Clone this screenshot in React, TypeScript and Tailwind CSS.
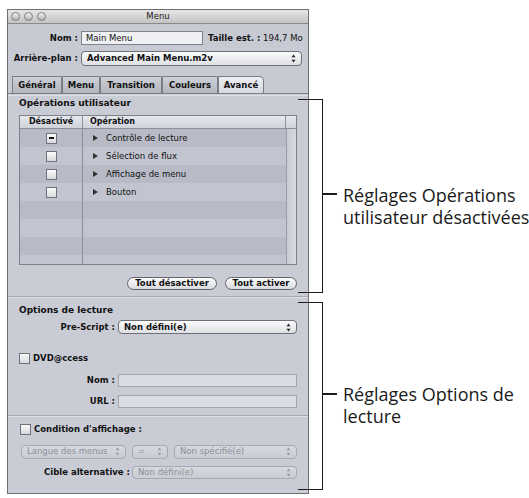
import React from 'react';

function Arrows({ disabled = false }: { disabled?: boolean }) {
  const c = disabled ? '#9a9da5' : '#222';
  return (
    <svg width="5" height="9" viewBox="0 0 5 9" className="shrink-0">
      <path d="M2.5 0.5 L4.5 3.3 L0.5 3.3 Z" fill={c} />
      <path d="M2.5 8.5 L4.5 5.7 L0.5 5.7 Z" fill={c} />
    </svg>
  );
}

function Popup({ text, w, h = 14, disabled = false }: { text: string; w: string; h?: number; disabled?: boolean }) {
  return (
    <div
      className={`${w} flex items-center justify-between pl-[5px] pr-[5px] rounded-[4px] border ${
        disabled
          ? 'border-[#a7aab2] bg-gradient-to-b from-[#d6d9df] to-[#c9ccd3] text-[#8c8f97] font-normal'
          : 'border-[#6e7078] bg-gradient-to-b from-[#fbfbfc] to-[#dfe0e4] text-[#111] font-bold'
      }`}
      style={{ height: h }}
    >
      <span className="truncate">{text}</span>
      <Arrows disabled={disabled} />
    </div>
  );
}

function Checkbox({ mixed = false }: { mixed?: boolean }) {
  return (
    <div className="w-[11px] h-[11px] shrink-0 border border-[#6f727a] bg-gradient-to-b from-[#fafafa] to-[#d9dade] flex items-center justify-center">
      {mixed && <div className="w-[5px] h-[2px] bg-[#111]" />}
    </div>
  );
}

function Field({ w, h = 13 }: { w: string; h?: number }) {
  return <div className={`${w} border border-[#a3a6ae] bg-[#d9dce3]`} style={{ height: h }} />;
}

const tabs = [
  { label: 'Général', w: 'w-[50px]' },
  { label: 'Menu', w: 'w-[38px]' },
  { label: 'Transition', w: 'w-[62px]' },
  { label: 'Couleurs', w: 'w-[56px]' },
  { label: 'Avancé', w: 'w-[46px]', active: true },
];

const operations = ['Contrôle de lecture', 'Sélection de flux', 'Affichage de menu', 'Bouton'];

export default function App() {
  const rows = Array.from({ length: 8 }, (_, i) => i);

  return (
    <div
      className="w-[529px] h-[498px] bg-white overflow-hidden flex items-start text-[8.5px] text-[#111]"
      style={{ fontFamily: '"DejaVu Sans", Verdana, sans-serif' }}
    >
      {/* Window */}
      <div className="ml-[7px] mt-[9px] w-[302px] h-[485px] shrink-0 border border-[#6d6f75] bg-[#c7cad3] flex flex-col">
        {/* Title bar */}
        <div className="h-[14px] relative flex items-center justify-center bg-gradient-to-b from-[#e6e6e6] to-[#c4c4c4] border-b border-[#8a8a8a]">
          <div className="absolute left-[3px] top-[2px] flex gap-[4px]">
            {[0, 1, 2].map((i) => (
              <div key={i} className="w-[9px] h-[9px] rounded-full border border-[#7c7c7c] bg-gradient-to-b from-[#f2f2f2] to-[#b3b3b3]" />
            ))}
          </div>
          <span className="text-[8.5px] text-[#222]">Menu</span>
        </div>

        {/* Nom */}
        <div className="mt-[7px] h-[14px] flex items-center">
          <div className="w-[70px] text-right font-bold">Nom :</div>
          <div className="ml-[3px] w-[122px] h-[14px] border border-[#7f8289] bg-[#eef0f4] flex items-center pl-[4px]">
            Main Menu
          </div>
          <div className="ml-[5px] whitespace-nowrap">
            <span className="font-bold">Taille est. :</span> 194,7 Mo
          </div>
        </div>

        {/* Arrière-plan */}
        <div className="mt-[6px] flex items-center">
          <div className="w-[70px] text-right font-bold whitespace-nowrap">Arrière-plan :</div>
          <div className="ml-[3px]">
            <Popup text="Advanced Main Menu.m2v" w="w-[221px]" h={15} />
          </div>
        </div>

        {/* Tabs */}
        <div className="mt-[10px] h-[17px] pl-[4px] flex items-end">
          {tabs.map((t) => (
            <div
              key={t.label}
              className={`${t.w} h-[17px] flex items-center justify-center font-bold border border-b-0 ${
                t.active
                  ? 'bg-gradient-to-b from-[#eceef2] to-[#d6d9e0] border-[#7a7d85] rounded-tr-[5px]'
                  : 'bg-gradient-to-b from-[#cdd0d7] to-[#b3b6bf] border-[#7a7d85] rounded-tr-[2px]'
              }`}
            >
              {t.label}
            </div>
          ))}
        </div>

        {/* Panel */}
        <div className="flex-1 border-t border-[#7d8088] bg-[#c9ccd5] flex flex-col">
          {/* Section 1 */}
          <div className="mt-[1px] border-t border-[#dfe1e7] px-[11px] pb-[6px] border-b border-b-[#a5a8b0]">
            <div className="mt-[1px] h-[12px] leading-[12px] font-bold text-[9px]">Opérations utilisateur</div>
            <div className="mt-[6px] h-[150px] border border-[#7e818a] flex flex-col overflow-hidden">
              <div className="h-[13px] shrink-0 flex bg-gradient-to-b from-[#e6e8ed] to-[#cfd2d9] border-b border-[#8c8f98] text-[8px] font-bold">
                <div className="w-[63px] flex items-center justify-center border-r border-[#8c8f98]">Désactivé</div>
                <div className="flex-1 flex items-center pl-[7px] border-r border-[#8c8f98]">Opération</div>
                <div className="w-[10px]" />
              </div>
              <div className="flex-1 flex">
                <div className="flex-1 flex flex-col">
                  {rows.map((i) => (
                    <div key={i} className={`h-[18px] shrink-0 flex ${i % 2 === 0 ? 'bg-[#b8bbc6]' : 'bg-[#c2c5cf]'}`}>
                      <div className="w-[63px] flex items-center justify-center border-r border-[#8c8f98]">
                        {i < operations.length && <Checkbox mixed={i === 0} />}
                      </div>
                      <div className="flex-1 flex items-center pl-[10px] text-[8.5px]">
                        {i < operations.length && (
                          <>
                            <svg width="5" height="6" viewBox="0 0 5 6" className="shrink-0">
                              <path d="M0 0 L5 3 L0 6 Z" fill="#333" />
                            </svg>
                            <span className="ml-[8px] whitespace-nowrap">{operations[i]}</span>
                          </>
                        )}
                      </div>
                    </div>
                  ))}
                </div>
                <div className="w-[10px] border-l border-[#9a9da6] bg-gradient-to-r from-[#c8cbd4] to-[#d8dae1]" />
              </div>
            </div>
            <div className="mt-[12px] flex justify-end gap-[8px]">
              <div className="w-[90px] h-[13px] rounded-full border border-[#61646b] bg-gradient-to-b from-[#fdfdfd] to-[#d9dadf] flex items-center justify-center font-bold">
                Tout désactiver
              </div>
              <div className="w-[72px] h-[13px] rounded-full border border-[#61646b] bg-gradient-to-b from-[#fdfdfd] to-[#d9dadf] flex items-center justify-center font-bold">
                Tout activer
              </div>
            </div>
          </div>

          {/* Section 2 */}
          <div className="border-t border-[#dfe1e7] pb-[7px] border-b border-b-[#a5a8b0]">
            <div className="mt-[6px] pl-[11px] h-[12px] leading-[12px] font-bold text-[9px]">Options de lecture</div>
            <div className="mt-[4px] flex items-center">
              <div className="w-[107px] text-right font-bold">Pre-Script :</div>
              <div className="ml-[3px]">
                <Popup text="Non défini(e)" w="w-[179px]" h={14} />
              </div>
            </div>
            <div className="mt-[18px] pl-[11px] flex items-center">
              <Checkbox />
              <span className="ml-[3px] font-bold">DVD@ccess</span>
            </div>
            <div className="mt-[9px] flex items-center">
              <div className="w-[107px] text-right font-bold">Nom :</div>
              <div className="ml-[3px]">
                <Field w="w-[179px]" />
              </div>
            </div>
            <div className="mt-[8px] flex items-center">
              <div className="w-[107px] text-right font-bold">URL :</div>
              <div className="ml-[3px]">
                <Field w="w-[179px]" />
              </div>
            </div>
          </div>

          {/* Section 3 */}
          <div className="border-t border-[#dfe1e7]">
            <div className="mt-[6px] pl-[12px] flex items-center">
              <Checkbox />
              <span className="ml-[3px] font-bold">Condition d'affichage :</span>
            </div>
            <div className="mt-[9px] pl-[13px] flex items-center gap-[6px]">
              <Popup text="Langue des menus" w="w-[105px]" h={14} disabled />
              <Popup text="=" w="w-[36px]" h={14} disabled />
              <Popup text="Non spécifié(e)" w="w-[123px]" h={14} disabled />
            </div>
            <div className="mt-[7px] flex items-center">
              <div className="w-[122px] text-right font-bold whitespace-nowrap">Cible alternative :</div>
              <div className="ml-[2px]">
                <Popup text="Non défini(e)" w="w-[165px]" h={13} disabled />
              </div>
            </div>
          </div>
        </div>
      </div>

      {/* Annotations */}
      <div
        className="-ml-[11px] mt-[99px] flex flex-col text-[18px] text-[#1a1a1a] whitespace-nowrap"
        style={{ fontFamily: '"Open Sans", "Noto Sans", sans-serif' }}
      >
        <div className="h-[194px] flex">
          <div className="w-[25px] h-full border-[1.5px] border-l-0 border-[#1a1a1a]" />
          <div className="pt-[85px] flex items-start">
            <div className="mt-[9px] w-[14px] h-[1.5px] bg-[#1a1a1a]" />
            <div className="ml-[6px] leading-[22px]">
              <div>Réglages Opérations</div>
              <div>utilisateur désactivées</div>
            </div>
          </div>
        </div>
        <div className="mt-[9px] h-[188px] flex">
          <div className="w-[25px] h-full border-[1.5px] border-l-0 border-[#1a1a1a]" />
          <div className="pt-[81px] flex items-start">
            <div className="mt-[10px] w-[14px] h-[1.5px] bg-[#1a1a1a]" />
            <div className="ml-[6px] leading-[22px]">
              <div>Réglages Options de</div>
              <div>lecture</div>
            </div>
          </div>
        </div>
      </div>
    </div>
  );
}
